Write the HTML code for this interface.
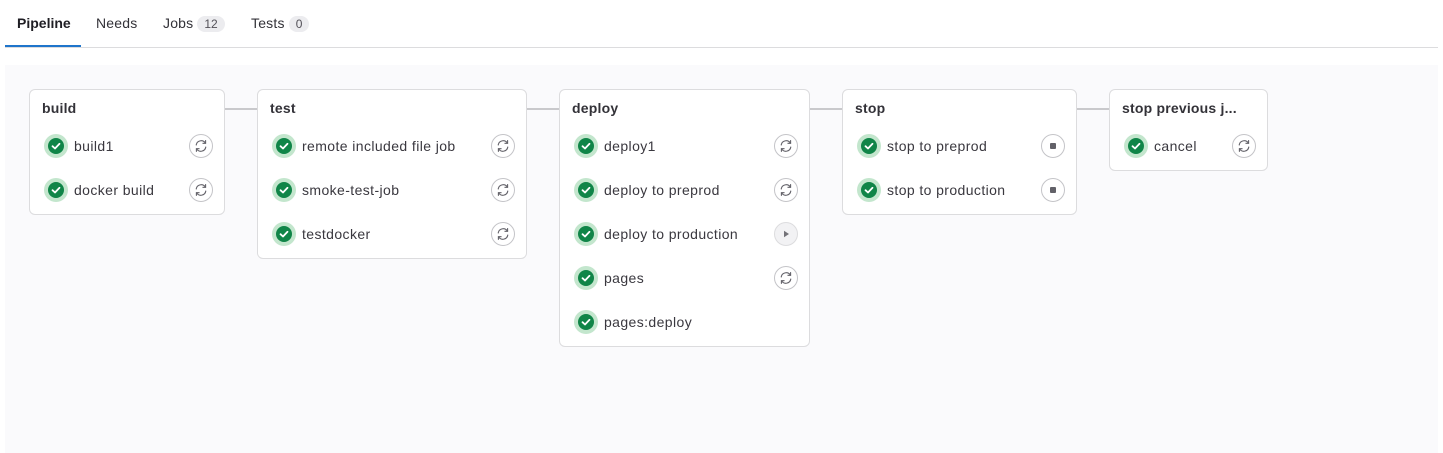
<!DOCTYPE html>
<html><head><meta charset="utf-8"><style>
*{box-sizing:border-box;margin:0;padding:0}
body{width:1443px;height:453px;background:#fff;font-family:"Liberation Sans",sans-serif;color:#333238;position:relative;overflow:hidden}
.tabs{position:absolute;left:5px;right:5px;top:0;height:48px;border-bottom:1px solid #dcdcde}
.tab{position:absolute;top:15px;font-size:14px;color:#333238;letter-spacing:0.2px}
.tab.active{font-weight:bold;color:#1f1e24;letter-spacing:0}
.ul{position:absolute;left:0;width:76px;top:45px;height:2px;background:#1f75cb}
.badge{display:inline-block;background:#ececef;color:#535158;font-size:12px;border-radius:9px;padding:1px 7px;margin-left:4px;vertical-align:0;letter-spacing:0}
.panel{position:absolute;left:5px;top:65px;width:1433px;height:388px;background:#fafafc}
.card{position:absolute;top:89px;background:#fff;border:1px solid #dcdcde;border-radius:6px}
.card h3{position:absolute;left:12px;top:10px;font-size:14px;font-weight:bold;color:#333238;white-space:nowrap;letter-spacing:0.2px}
.job{position:absolute;left:0;right:0;height:30px}
.st{position:absolute;left:14px;top:3px;width:24px;height:24px;border-radius:50%;background:#c3e6cd}
.st::after{content:"";position:absolute;left:4px;top:4px;width:16px;height:16px;border-radius:50%;background:#108548}
.st svg{position:absolute;left:7px;top:8px;z-index:2}
.name{position:absolute;left:44px;top:7px;font-size:14px;color:#3a383f;white-space:nowrap;letter-spacing:0.4px}
.act{position:absolute;right:11px;top:3px;width:24px;height:24px;border-radius:50%;border:1px solid #c4c4c8;background:#fff}
.act.play{background:#f2f2f4;border-color:#dcdcde}
.act svg{position:absolute;left:3px;top:3px}
.line{position:absolute;top:108px;height:2px;background:#c9c9cc}
</style></head><body>
<div class="tabs">
<span class="tab active" style="left:12px">Pipeline</span>
<span class="tab" style="left:91px">Needs</span>
<span class="tab" style="left:158px">Jobs<span class="badge">12</span></span>
<span class="tab" style="left:246px">Tests<span class="badge">0</span></span>
<div class="ul"></div>
</div>
<div class="panel"></div>
<div class="line" style="left:224px;width:34px"></div>
<div class="line" style="left:526px;width:34px"></div>
<div class="line" style="left:809px;width:34px"></div>
<div class="line" style="left:1076px;width:34px"></div>

<svg width="0" height="0" style="position:absolute"><defs>
<symbol id="ck" viewBox="0 0 10 8"><path d="M1.5 4.2 L4 6.5 L8.5 1.8" fill="none" stroke="#fff" stroke-width="1.8" stroke-linecap="round" stroke-linejoin="round"/></symbol>
<symbol id="rt" viewBox="0 0 16 16"><g fill="none" stroke="#626168" stroke-width="1.1" stroke-linecap="round"><path d="M3.2 7A5 5 0 0 1 12.3 5"/><path d="M12.8 9A5 5 0 0 1 3.7 11"/><path d="M12.6 2.6V5.3H9.9"/><path d="M3.4 13.4V10.7H6.1"/></g></symbol>
<symbol id="sq" viewBox="0 0 16 16"><rect x="5" y="5" width="6" height="6" rx="1" fill="#626168"/></symbol>
<symbol id="pl" viewBox="0 0 16 16"><path d="M6 4.8V11.2L11 8Z" fill="#737278"/></symbol>
</defs></svg>

<div class="card" style="left:29px;width:196px;height:126px"><h3>build</h3>
<div class="job" style="top:41px"><span class="st"><svg width="10" height="8"><use href="#ck"/></svg></span><span class="name">build1</span><span class="act"><svg width="16" height="16"><use href="#rt"/></svg></span></div>
<div class="job" style="top:85px"><span class="st"><svg width="10" height="8"><use href="#ck"/></svg></span><span class="name">docker build</span><span class="act"><svg width="16" height="16"><use href="#rt"/></svg></span></div>
</div>

<div class="card" style="left:257px;width:270px;height:170px"><h3>test</h3>
<div class="job" style="top:41px"><span class="st"><svg width="10" height="8"><use href="#ck"/></svg></span><span class="name">remote included file job</span><span class="act"><svg width="16" height="16"><use href="#rt"/></svg></span></div>
<div class="job" style="top:85px"><span class="st"><svg width="10" height="8"><use href="#ck"/></svg></span><span class="name">smoke-test-job</span><span class="act"><svg width="16" height="16"><use href="#rt"/></svg></span></div>
<div class="job" style="top:129px"><span class="st"><svg width="10" height="8"><use href="#ck"/></svg></span><span class="name">testdocker</span><span class="act"><svg width="16" height="16"><use href="#rt"/></svg></span></div>
</div>

<div class="card" style="left:559px;width:251px;height:258px"><h3>deploy</h3>
<div class="job" style="top:41px"><span class="st"><svg width="10" height="8"><use href="#ck"/></svg></span><span class="name">deploy1</span><span class="act"><svg width="16" height="16"><use href="#rt"/></svg></span></div>
<div class="job" style="top:85px"><span class="st"><svg width="10" height="8"><use href="#ck"/></svg></span><span class="name">deploy to preprod</span><span class="act"><svg width="16" height="16"><use href="#rt"/></svg></span></div>
<div class="job" style="top:129px"><span class="st"><svg width="10" height="8"><use href="#ck"/></svg></span><span class="name">deploy to production</span><span class="act play"><svg width="16" height="16"><use href="#pl"/></svg></span></div>
<div class="job" style="top:173px"><span class="st"><svg width="10" height="8"><use href="#ck"/></svg></span><span class="name">pages</span><span class="act"><svg width="16" height="16"><use href="#rt"/></svg></span></div>
<div class="job" style="top:217px"><span class="st"><svg width="10" height="8"><use href="#ck"/></svg></span><span class="name">pages:deploy</span></div>
</div>

<div class="card" style="left:842px;width:235px;height:126px"><h3>stop</h3>
<div class="job" style="top:41px"><span class="st"><svg width="10" height="8"><use href="#ck"/></svg></span><span class="name">stop to preprod</span><span class="act"><svg width="16" height="16"><use href="#sq"/></svg></span></div>
<div class="job" style="top:85px"><span class="st"><svg width="10" height="8"><use href="#ck"/></svg></span><span class="name">stop to production</span><span class="act"><svg width="16" height="16"><use href="#sq"/></svg></span></div>
</div>

<div class="card" style="left:1109px;width:159px;height:82px"><h3>stop previous j...</h3>
<div class="job" style="top:41px"><span class="st"><svg width="10" height="8"><use href="#ck"/></svg></span><span class="name">cancel</span><span class="act"><svg width="16" height="16"><use href="#rt"/></svg></span></div>
</div>
</body></html>
